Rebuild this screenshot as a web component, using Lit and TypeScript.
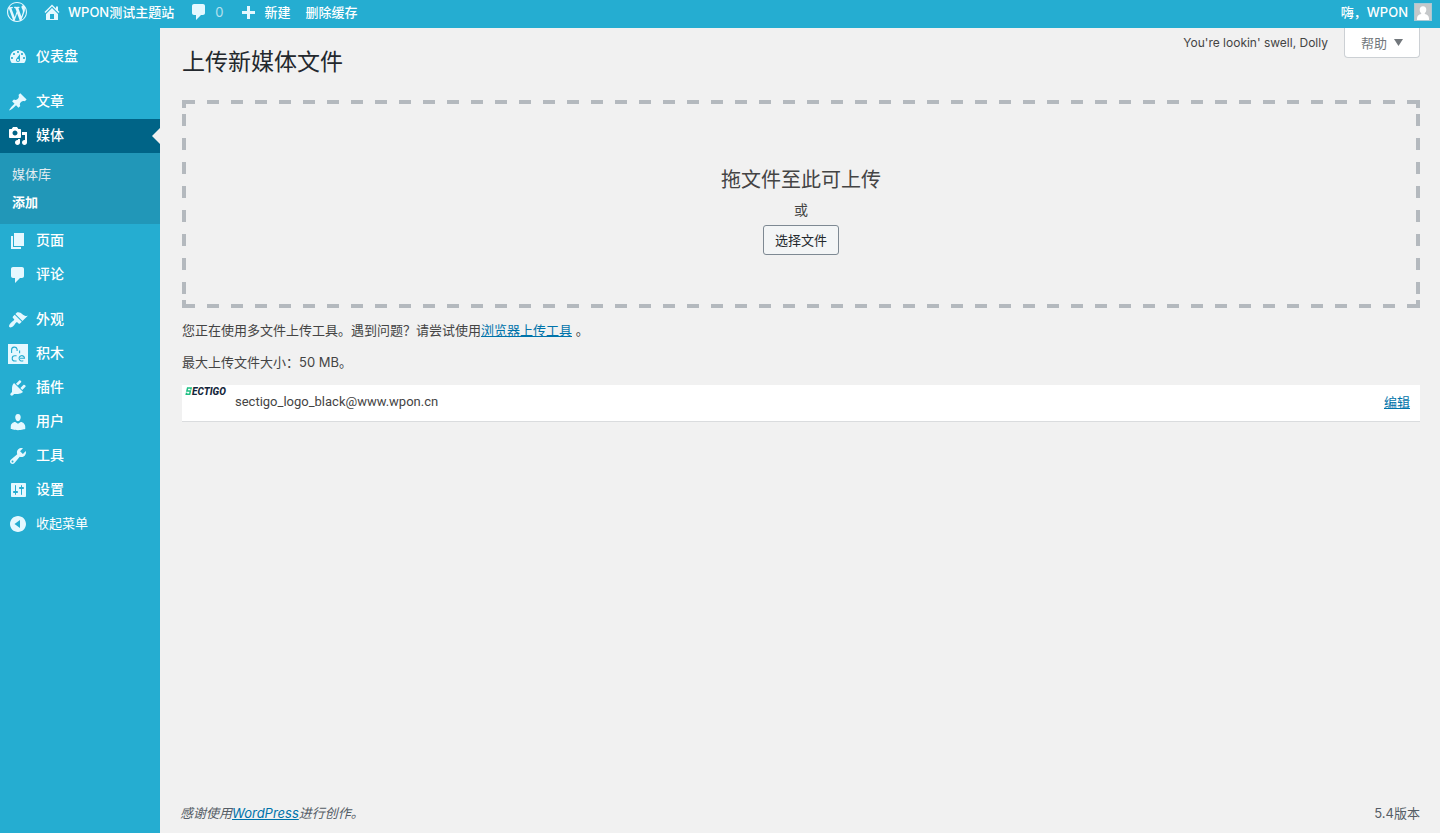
import { LitElement, html, svg, css, nothing } from "lit";
import { customElement, property } from "lit/decorators.js";
import { classMap } from "lit/directives/class-map.js";

const icons: Record<string, string> = {
  wordpress:
    "M20 10c0-5.51-4.49-10-10-10C4.48 0 0 4.49 0 10c0 5.52 4.48 10 10 10 5.51 0 10-4.48 10-10zM7.78 15.37L4.37 6.22c.55-.02 1.17-.08 1.17-.08.5-.06.44-1.13-.06-1.11 0 0-1.45.11-2.37.11-.18 0-.37 0-.58-.01C4.12 2.69 6.87 1.11 10 1.11c2.33 0 4.45.87 6.05 2.34-.68-.11-1.65.39-1.65 1.58 0 .74.45 1.36.9 2.1.35.61.55 1.36.55 2.46 0 1.49-1.4 5-1.4 5l-3.03-8.37c.54-.02.82-.17.82-.17.5-.05.44-1.25-.06-1.22 0 0-1.44.12-2.38.12-.87 0-2.33-.12-2.33-.12-.5-.03-.56 1.2-.06 1.22l.92.08 1.26 3.41zM17.41 10c.24-.64.74-1.87.43-4.25.7 1.29 1.05 2.71 1.05 4.25 0 3.29-1.73 6.24-4.4 7.78.97-2.59 1.94-5.2 2.92-7.78zM6.1 18.09C3.12 16.65 1.11 13.53 1.11 10c0-1.3.23-2.48.72-3.59C3.25 10.3 4.67 14.2 6.1 18.09zm4.03-6.63l2.58 6.98c-.86.29-1.76.45-2.71.45-.79 0-1.57-.11-2.29-.33.81-2.38 1.62-4.74 2.42-7.1z",
  home: "M16 8.5l1.53 1.53-1.06 1.06L10 4.6l-6.47 6.49-1.06-1.06L10 2.5l4 4v-2h2v4zm-6-2.46l6 5.99V18H4v-5.97zM12 17v-5H8v5h4z",
  comments:
    "M5 2h9c1.1 0 2 .9 2 2v7c0 1.1-.9 2-2 2h-2l-5 5v-5H5c-1.1 0-2-.9-2-2V4c0-1.1.9-2 2-2z",
  plus: "M17 9v3h-5v5H9v-5H4V9h5V4h3v5h5z",
  dashboard:
    "M3.76 16h12.48c1.1-1.37 1.76-3.11 1.76-5 0-4.42-3.58-8-8-8s-8 3.58-8 8c0 1.89.66 3.63 1.76 5zM10 4c.55 0 1 .45 1 1s-.45 1-1 1-1-.45-1-1 .45-1 1-1zM6 6c.55 0 1 .45 1 1s-.45 1-1 1-1-.45-1-1 .45-1 1-1zm8 0c.55 0 1 .45 1 1s-.45 1-1 1-1-.45-1-1 .45-1 1-1zm-5.37 5.55L12 7v6c0 1.1-.9 2-2 2s-2-.9-2-2c0-.57.24-1.08.63-1.45zM4 10c.55 0 1 .45 1 1s-.45 1-1 1-1-.45-1-1 .45-1 1-1zm12 0c.55 0 1 .45 1 1s-.45 1-1 1-1-.45-1-1 .45-1 1-1zm-5 3c0-.55-.45-1-1-1s-1 .45-1 1 .45 1 1 1 1-.45 1-1z",
  post: "M10.44 3.02l1.82-1.82 6.36 6.35-1.83 1.82c-1.05-.68-2.48-.57-3.41.36l-.75.75c-.92.93-1.04 2.35-.35 3.41l-1.83 1.82-2.41-2.41-2.8 2.79c-.42.42-3.38 2.71-3.8 2.29s1.86-3.39 2.28-3.81l2.79-2.79L4.1 9.36l1.83-1.82c1.05.69 2.48.57 3.4-.36l.75-.75c.93-.92 1.05-2.35.36-3.41z",
  media:
    "M13 11V4c0-.55-.45-1-1-1h-1.67L9 1H5L3.67 3H2c-.55 0-1 .45-1 1v7c0 .55.45 1 1 1h10c.55 0 1-.45 1-1zM7 4.5c1.38 0 2.5 1.12 2.5 2.5S8.38 9.5 7 9.5 4.5 8.38 4.5 7 5.62 4.5 7 4.5zM14 6h5v10.5c0 1.38-1.12 2.5-2.5 2.5S14 17.88 14 16.5s1.12-2.5 2.5-2.5c.17 0 .34.02.5.05V9h-3V6zm-4 8.05V13h2v3.5c0 1.38-1.12 2.5-2.5 2.5S7 17.88 7 16.5 8.12 14 9.5 14c.17 0 .34.02.5.05z",
  page: "M6 15V2h10v13H6zm-1 1h8v2H3V5h2v11z",
  appearance:
    "M14.48 11.06L7.41 3.99l1.5-1.5c.5-.56 2.3-.47 3.51.32 1.21.8 1.43 1.28 2.91 2.1 1.18.64 2.45 1.26 4.45.85zm-.71.71L6.7 4.7 4.93 6.47c-.39.39-.39 1.02 0 1.41l1.06 1.06c.39.39.39 1.03 0 1.42-.6.6-1.43 1.11-2.21 1.69-.35.26-.7.53-1.01.84C1.43 14.23.4 16.08 1.4 17.07c.99 1 2.84-.03 4.18-1.36.31-.31.58-.66.85-1.02.57-.78 1.08-1.61 1.69-2.21.39-.39 1.02-.39 1.41 0l1.06 1.06c.39.39 1.02.39 1.41 0z",
  plugins:
    "M13.11 4.36L9.87 7.6 8 5.73l3.24-3.24c.35-.34 1.05-.2 1.56.32.52.51.66 1.21.31 1.55zm-8 1.77l.91-1.12 9.01 9.01-1.19.84c-.71.71-2.63 1.16-3.82 1.16H6.14L4.9 17.26c-.59.59-1.54.59-2.12 0-.59-.58-.59-1.53 0-2.12l1.24-1.24v-3.88c0-1.13.4-3.19 1.09-3.89zm7.26 3.97l3.24-3.24c.34-.35 1.04-.21 1.55.31.52.51.66 1.21.31 1.55l-3.24 3.25z",
  users:
    "M10 9.25c-2.27 0-2.73-3.44-2.73-3.44C7 4.02 7.82 2 9.97 2c2.16 0 2.98 2.02 2.71 3.81 0 0-.41 3.44-2.68 3.44zm0 2.57L12.72 10c2.39 0 4.52 2.33 4.52 4.53v2.49s-3.65 1.13-7.24 1.13c-3.65 0-7.24-1.13-7.24-1.13v-2.49c0-2.25 1.94-4.48 4.47-4.48z",
  tools:
    "M16.68 9.77c-1.34 1.34-3.3 1.67-4.95.99l-5.41 6.52c-.99.99-2.59.99-3.58 0s-.99-2.59 0-3.57l6.52-5.42c-.68-1.65-.35-3.61.99-4.95 1.28-1.28 3.12-1.62 4.72-1.06l-2.89 2.89 2.82 2.82 2.86-2.87c.53 1.58.18 3.39-1.08 4.65zM3.81 16.21c.4.39 1.04.39 1.43 0 .4-.4.4-1.04 0-1.43-.39-.4-1.03-.4-1.43 0-.39.39-.39 1.03 0 1.43z",
  settings:
    "M18 16V4c0-.55-.45-1-1-1H4c-.55 0-1 .45-1 1v12c0 .55.45 1 1 1h13c.55 0 1-.45 1-1zM8 11h1c.55 0 1 .45 1 1s-.45 1-1 1H8v1.500c0 .28-.22.5-.5.5s-.5-.22-.5-.5V13H6c-.55 0-1-.45-1-1s.45-1 1-1h1V5.500c0-.28.22-.5.5-.5s.5.22.5.5V11zm5-2h-1c-.55 0-1-.45-1-1s.45-1 1-1h1V5.500c0-.28.22-.5.5-.5s.5.22.5.5V7h1c.55 0 1 .45 1 1s-.45 1-1 1h-1v5.500c0 .28-.22.5-.5.5s-.5-.22-.5-.5V9z",
  collapse:
    "M10 2c4.420 0 8 3.580 8 8s-3.580 8-8 8-8-3.580-8-8 3.580-8 8-8zm2 12V6l-5.500 4z",
};

@customElement("wp-icon")
export class WpIcon extends LitElement {
  @property() name = "";

  static styles = css`
    :host {
      display: block;
      flex: none;
      width: 20px;
      height: 20px;
    }
    .glyph {
      display: block;
      width: 100%;
      height: 100%;
      fill: currentColor;
    }
    .line {
      fill: none;
      stroke: #25add1;
      stroke-width: 1.1;
    }
  `;

  render() {
    const shape =
      this.name === "blocks"
        ? svg`<path d="M0 0h20v20H0z"/>
            <g class="line">
              <path d="M3.600 9V6a2.800 2.800 0 0 1 5.500-.8V7M11.600 6.500V9.200M8.600 11.800H6.800a2.600 2.600 0 0 0 0 5.200H8.600M12 14.300H16.500a2.700 2.700 0 1 0-1.200 2.300"/>
            </g>`
        : svg`<path fill-rule="evenodd" d=${icons[this.name] ?? ""}/>`;
    return html`<svg class="glyph" viewBox="0 0 20 20" aria-hidden="true">${shape}</svg>`;
  }
}

@customElement("admin-bar")
export class AdminBar extends LitElement {
  static styles = css`
    :host {
      display: block;
      background: #25add1;
      color: #fff;
      font-size: 13px;
      font-weight: 500;
      line-height: 24px;
    }
    .bar {
      display: flex;
      justify-content: space-between;
      height: 24px;
      padding: 0 8px 4px 7px;
    }
    .group {
      display: flex;
      gap: 15px;
    }
    .item {
      display: flex;
      align-items: center;
      gap: 6px;
      color: inherit;
      text-decoration: none;
    }
    .item wp-icon {
      color: #e5f8ff;
    }
    .count {
      font-weight: 400;
      opacity: 0.65;
    }
    .avatar {
      width: 16px;
      height: 16px;
      border: 1px solid #a9c9d4;
    }
  `;

  render() {
    return html`
      <nav class="bar" aria-label="工具栏">
        <div class="group">
          <a class="item" href="#" aria-label="WordPress"><wp-icon name="wordpress"></wp-icon></a>
          <a class="item" href="#"><wp-icon name="home"></wp-icon>WPON测试主题站</a>
          <a class="item" href="#"><wp-icon name="comments"></wp-icon><span class="count">0</span></a>
          <a class="item" href="#"><wp-icon name="plus"></wp-icon>新建</a>
          <a class="item" href="#">删除缓存</a>
        </div>
        <a class="item" href="#">嗨，WPON
          <svg class="avatar" viewBox="0 0 16 16" aria-hidden="true">
            <path fill="#c5c8ca" d="M0 0h16v16H0z" />
            <path fill="#fff" d="M8 2.200c2.100 0 3.300 1.500 3.300 3.500 0 1.500-.6 2.600-1.500 3.300v1c2.500.6 4.200 2 4.200 4.500V16H2v-1.500C2 12 3.700 10.600 6.200 10V9C5.300 8.300 4.700 7.200 4.700 5.700c0-2 1.200-3.500 3.300-3.500z" />
          </svg>
        </a>
      </nav>
    `;
  }
}

interface MenuEntry {
  icon: string;
  label: string;
  children?: { label: string; current?: boolean }[];
}

const menuGroups: MenuEntry[][] = [
  [{ icon: "dashboard", label: "仪表盘" }],
  [
    { icon: "post", label: "文章" },
    {
      icon: "media",
      label: "媒体",
      children: [{ label: "媒体库" }, { label: "添加", current: true }],
    },
    { icon: "page", label: "页面" },
    { icon: "comments", label: "评论" },
  ],
  [
    { icon: "appearance", label: "外观" },
    { icon: "blocks", label: "积木" },
    { icon: "plugins", label: "插件" },
    { icon: "users", label: "用户" },
    { icon: "tools", label: "工具" },
    { icon: "settings", label: "设置" },
  ],
];

@customElement("admin-menu")
export class AdminMenu extends LitElement {
  static styles = css`
    :host {
      display: block;
      background: #25add1;
      color: #fff;
    }
    .menu {
      display: flex;
      flex-direction: column;
      gap: 11px;
      padding-top: 12px;
    }
    .group,
    .submenu {
      margin: 0;
      padding: 0;
      list-style: none;
    }
    .entry {
      position: relative;
      display: flex;
      align-items: center;
      gap: 8px;
      box-sizing: border-box;
      width: 100%;
      height: 34px;
      padding: 0 8px;
      border: 0;
      background: none;
      color: inherit;
      font: inherit;
      font-size: 14px;
      font-weight: 500;
      text-decoration: none;
    }
    .entry wp-icon {
      color: #e5f8ff;
    }
    .label {
      padding-bottom: 2px;
    }
    .open {
      background: #006487;
    }
    .open wp-icon {
      color: #fff;
    }
    .open::after {
      content: "";
      position: absolute;
      top: 9px;
      right: 0;
      border: 8px solid transparent;
      border-left-width: 0;
      border-right-color: #f1f1f1;
    }
    .submenu {
      padding: 7px 12px 8px;
      background: #2197b8;
      font-size: 13px;
      line-height: 28px;
    }
    .link {
      display: block;
      color: #e2ecf1;
      text-decoration: none;
    }
    .current {
      color: #fff;
      font-weight: 600;
    }
    .collapse {
      font-size: 13px;
      font-weight: 400;
    }
  `;

  render() {
    return html`
      <nav class="menu" aria-label="主菜单">
        ${menuGroups.map(
          (group, i) => html`
            <ul class="group">
              ${group.map((entry) => this.renderEntry(entry))}
              ${i === menuGroups.length - 1
                ? html`<li>
                    <button class="entry collapse" type="button">
                      <wp-icon name="collapse"></wp-icon><span class="label">收起菜单</span>
                    </button>
                  </li>`
                : nothing}
            </ul>
          `
        )}
      </nav>
    `;
  }

  private renderEntry(entry: MenuEntry) {
    return html`
      <li>
        <a class=${classMap({ entry: true, open: !!entry.children })} href="#">
          <wp-icon name=${entry.icon}></wp-icon><span class="label">${entry.label}</span>
        </a>
        ${entry.children
          ? html`<ul class="submenu">
              ${entry.children.map(
                (c) => html`<li>
                  <a class=${classMap({ link: true, current: !!c.current })} href="#">${c.label}</a>
                </li>`
              )}
            </ul>`
          : nothing}
      </li>
    `;
  }
}

@customElement("app-root")
export class AppRoot extends LitElement {
  static styles = css`
    :host {
      display: grid;
      grid-template: auto 1fr / 160px 1fr;
      min-height: 100vh;
      background: #f1f1f1;
      color: #444;
      font: 13px/20px Inter, "Noto Sans CJK SC", sans-serif;
    }
    admin-bar {
      grid-column: 1 / -1;
    }
    .content {
      display: flex;
      flex-direction: column;
      padding: 0 20px;
    }
    .main {
      flex: 1;
      padding-left: 2px;
    }
    .top {
      display: flex;
      align-items: flex-start;
      gap: 16px;
    }
    .title {
      flex: 1;
      margin: 0;
      padding: 19px 0 23px;
      color: #23282d;
      font-size: 23px;
      font-weight: 400;
      line-height: 30px;
    }
    .quote {
      margin: 0;
      padding-top: 5px;
      font-size: 12px;
    }
    .help {
      display: flex;
      align-items: center;
      gap: 7px;
      height: 30px;
      padding: 0 16px;
      border: 1px solid #ccd0d4;
      border-top: 0;
      border-radius: 0 0 4px 4px;
      background: #fff;
      color: #72777c;
      font: inherit;
    }
    .arrow {
      width: 9px;
      height: 7px;
      fill: #72777c;
    }
    .drop {
      --dash: #b4b9be;
      --solid: linear-gradient(var(--dash), var(--dash));
      --across: linear-gradient(90deg, var(--dash) 50%, transparent 50%);
      --down: linear-gradient(var(--dash) 50%, transparent 50%);
      display: flex;
      flex-direction: column;
      align-items: center;
      padding: 65px 4px 53px;
      background:
        var(--solid) 0 0 / 4px 8px no-repeat,
        var(--solid) 100% 0 / 4px 8px no-repeat,
        var(--solid) 0 100% / 4px 8px no-repeat,
        var(--solid) 100% 100% / 4px 8px no-repeat,
        var(--across) 1px 0 / 24px 4px repeat-x,
        var(--across) 1px 100% / 24px 4px repeat-x,
        var(--down) 0 14px / 4px 24px repeat-y,
        var(--down) 100% 14px / 4px 24px repeat-y;
    }
    .lead {
      margin: 0;
      font-size: 20px;
      line-height: 30px;
    }
    .or {
      margin: 0;
      padding: 5px 0;
      font-size: 14px;
    }
    .choose {
      height: 30px;
      padding: 0 11px;
      border: 1px solid #7e8993;
      border-radius: 3px;
      background: #f3f5f6;
      color: #23282d;
      font: inherit;
    }
    .note {
      margin: 12px 0;
    }
    a {
      color: #0073aa;
    }
    .file {
      display: flex;
      align-items: center;
      box-sizing: border-box;
      height: 37px;
      margin-top: 13px;
      padding: 0 10px 2px 0;
      border-bottom: 1px solid #dadcde;
      background: #fff;
    }
    .logo {
      align-self: flex-start;
      width: 53px;
      height: 12px;
    }
    .brand {
      font: italic 800 10px Roboto, sans-serif;
      fill: #14263b;
    }
    .name {
      flex: 1;
      font-family: Roboto, sans-serif;
    }
    .footer {
      display: flex;
      justify-content: space-between;
      padding-bottom: 10px;
      color: #555d66;
    }
    .thanks {
      font-style: italic;
    }
  `;

  render() {
    return html`
      <admin-bar></admin-bar>
      <admin-menu></admin-menu>
      <div class="content">
        <main class="main">
          <header class="top">
            <h1 class="title">上传新媒体文件</h1>
            <p class="quote">You're lookin' swell, Dolly</p>
            <button class="help" type="button">
              帮助
              <svg class="arrow" viewBox="0 0 9 7" aria-hidden="true"><path d="M0 0h9L4.500 7z" /></svg>
            </button>
          </header>
          <section class="drop">
            <p class="lead">拖文件至此可上传</p>
            <p class="or">或</p>
            <button class="choose" type="button">选择文件</button>
          </section>
          <p class="note">您正在使用多文件上传工具。遇到问题？请尝试使用<a href="#">浏览器上传工具</a> 。</p>
          <p class="note">最大上传文件大小：50 MB。</p>
          <div class="file">
            <svg class="logo" viewBox="0 0 53 12" role="img" aria-label="Sectigo">
              <path fill="none" stroke="#1fbf83" stroke-width="1.500" d="M8.800 4.600L9.100 3.100H5.600L4.900 5.900H8.400L7.700 9.200H4.300L4.600 7.600" />
              <text class="brand" x="10" y="10">ECTIGO</text>
            </svg>
            <span class="name">sectigo_logo_black@www.wpon.cn</span>
            <a href="#">编辑</a>
          </div>
        </main>
        <footer class="footer">
          <span class="thanks">感谢使用<a href="#">WordPress</a>进行创作。</span>
          <span>5.4版本</span>
        </footer>
      </div>
    `;
  }
}
